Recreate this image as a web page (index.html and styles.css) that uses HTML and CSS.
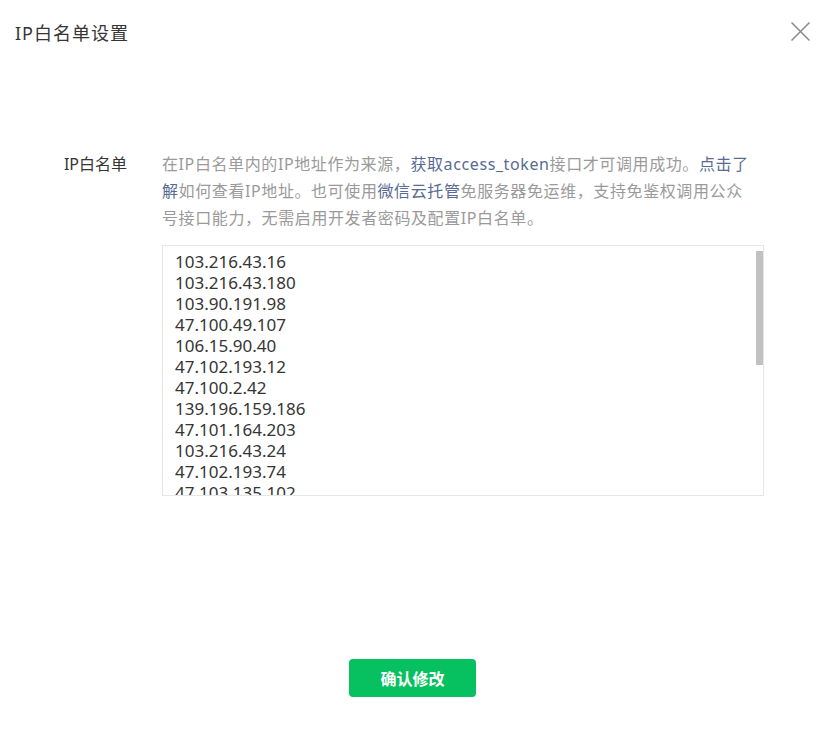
FILE: index.html
```html
<!DOCTYPE html>
<html lang="zh-CN">
<head>
<meta charset="utf-8">
<title>IP白名单设置</title>
<link rel="stylesheet" href="styles.css">
</head>
<body>
<div class="dialog">
  <div class="header">
    <h1 class="title">IP白名单设置</h1>
    <button class="close" type="button" aria-label="关闭">
      <svg width="19" height="19" viewBox="0 0 19 19"><path d="M0.5 0.5L18.5 18.5M18.5 0.5L0.5 18.5" stroke="#8a8a8a" stroke-width="1.5" fill="none"/></svg>
    </button>
  </div>
  <div class="body">
    <div class="label">IP白名单</div>
    <div class="content">
      <p class="desc">在IP白名单内的IP地址作为来源，<a class="link">获取access_token</a>接口才可调用成功。<a class="link">点击了<br>解</a>如何查看IP地址。也可使用<a class="link">微信云托管</a>免服务器免运维，支持免鉴权调用公众<br>号接口能力，无需启用开发者密码及配置IP白名单。</p>
      <div class="field">
        <textarea class="ips" spellcheck="false">103.216.43.16
103.216.43.180
103.90.191.98
47.100.49.107
106.15.90.40
47.102.193.12
47.100.2.42
139.196.159.186
47.101.164.203
103.216.43.24
47.102.193.74
47.103.135.102
47.103.135.103
101.37.100.18
101.37.100.19
121.40.100.21</textarea>
        <div class="thumb"></div>
      </div>
    </div>
  </div>
  <div class="footer">
    <button class="primary" type="button">确认修改</button>
  </div>
</div>
</body>
</html>
```

FILE: styles.css
```css
* { box-sizing: border-box; }
html, body { margin: 0; padding: 0; background: #fff; }
body {
  font-family: "Noto Sans", "Noto Sans CJK SC", sans-serif;
  color: #353535;
}
.dialog {
  width: 832px;
  height: 731px;
  display: flex;
  flex-direction: column;
}
.header {
  display: flex;
  justify-content: space-between;
  align-items: center;
  padding: 21px 22px 0 15px;
}
.title {
  margin: 0;
  font-size: 18px;
  font-weight: normal;
  line-height: 24px;
  letter-spacing: 1px;
  color: #353535;
}
.close {
  border: 0;
  background: none;
  padding: 0;
  width: 19px;
  height: 19px;
  margin-top: -3px;
  display: block;
}
.close svg { display: block; }
.body {
  display: flex;
  margin-top: 106px;
}
.label {
  width: 127px;
  text-align: right;
  font-size: 16px;
  line-height: 27px;
  color: #353535;
  flex: none;
}
.content {
  margin-left: 35px;
  width: 602px;
}
.desc {
  margin: 0;
  font-size: 16px;
  line-height: 27px;
  letter-spacing: 0.6px;
  color: #9a9a9a;
}
.link { color: #576b95; text-decoration: none; }
.field {
  position: relative;
  margin-top: 13px;
}
.ips {
  display: block;
  width: 602px;
  height: 251px;
  margin: 0;
  border: 1px solid #e4e6e8;
  padding: 5px 12px;
  font-family: "Noto Sans", "Noto Sans CJK SC", sans-serif;
  font-size: 17px;
  line-height: 21px;
  color: #353535;
  resize: none;
  overflow: hidden;
  outline: none;
}
.thumb {
  position: absolute;
  right: 1px;
  top: 6px;
  width: 7px;
  height: 114px;
  background: #c1c1c1;
}
.footer {
  display: flex;
  justify-content: center;
  padding-right: 7px;
  margin-top: 163px;
}
.primary {
  width: 127px;
  height: 38px;
  border: 0;
  border-radius: 4px;
  background: #07c160;
  color: #fff;
  font-family: "Noto Sans", "Noto Sans CJK SC", sans-serif;
  font-size: 16px;
  font-weight: 700;
  padding: 0;
}
```
